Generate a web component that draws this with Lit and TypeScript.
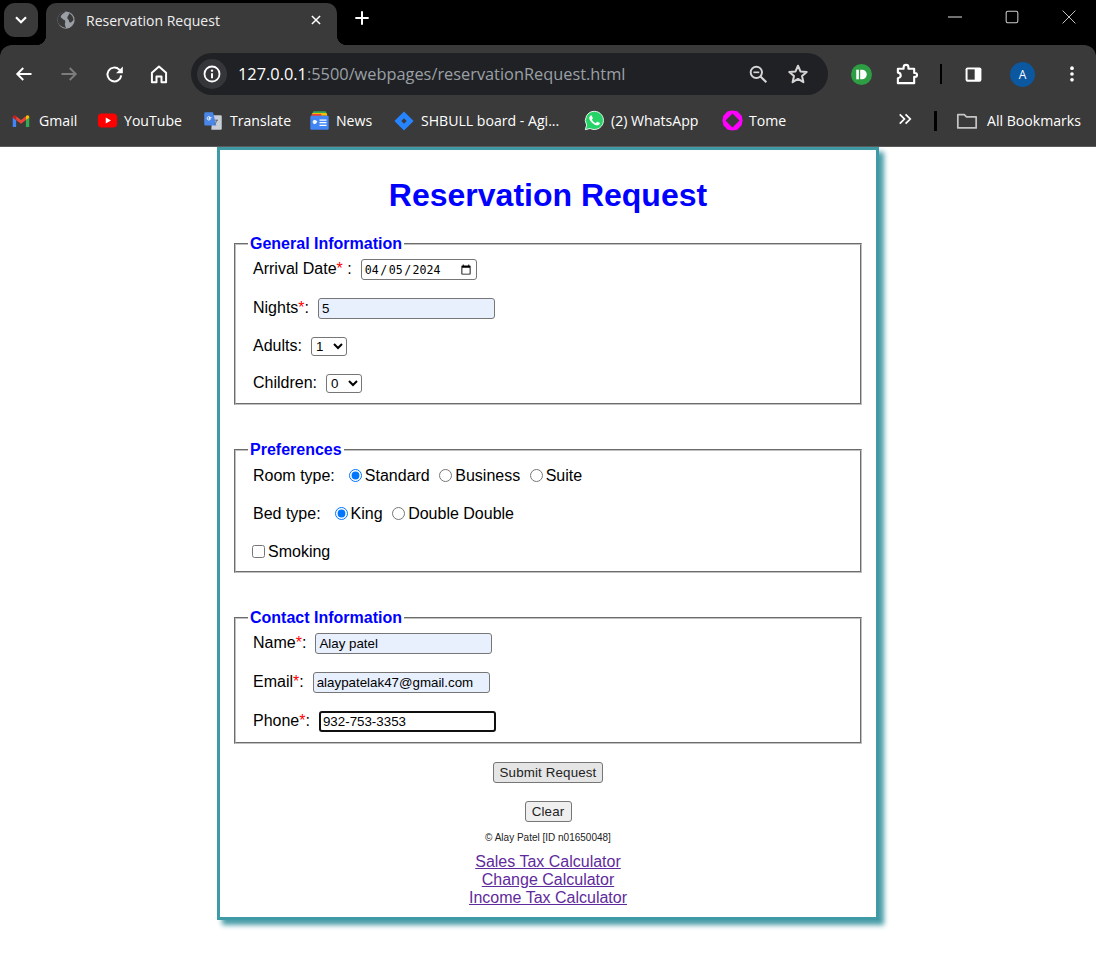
import { LitElement, html, css, svg } from "lit";
import { customElement } from "lit/decorators.js";

const icon = (size: number, body: unknown, vb = "0 0 24 24") =>
  html`<svg width=${size} height=${size} viewBox=${vb} fill="none" aria-hidden="true">${body}</svg>`;

const marks = {
  gmail: svg`<path d="M1 20h4.500V10.500L1 7z" fill="#4285f4"/><path d="M18.500 20H23V7l-4.500 3.500z" fill="#34a853"/><path d="M5.500 10.500 12 15.500l6.500-5V5.500L12 10.500 5.500 5.500z" fill="#ea4335"/><path d="M1 7.500V7c0-2.500 2.800-3.500 4.500-1.500v5z" fill="#c5221f"/><path d="M18.500 10.500v-5C20.500 3.500 23 4.500 23 7v.5z" fill="#fbbc04"/>`,
  youtube: svg`<rect x="1" y="4" width="22" height="16" rx="4.500" fill="#f00"/><path d="M10 8.500v7l6-3.500z" fill="#fff"/>`,
  translate: svg`<path d="M11 5h10a1.500 1.500 0 0 1 1.500 1.500V21a1.500 1.500 0 0 1-1.500 1.500H10z" fill="#c9ced6"/><path d="M3 1.500h9l4 16H3A1.500 1.500 0 0 1 1.500 16V3A1.500 1.500 0 0 1 3 1.500z" fill="#4a86e8"/><path d="M18 11h-3.500M16.500 11c-.3 2-1.500 4-3 5" stroke="#5f6368" stroke-width="1.200"/><path d="M10.300 8H7.200v1.300h1.700a2 2 0 1 1-.6-2" stroke="#fff" stroke-width="1.100"/>`,
  news: svg`<path d="M5 1.500h14l2 4H3z" fill="#34a853"/><path d="M4 3.500h16l1 3H3z" fill="#fbbc04"/><path d="M3 4.500h11v3H3z" fill="#ea4335"/><rect x="1.500" y="6.500" width="21" height="16" rx="1.500" fill="#4285f4"/><path d="M9.300 13H6.500v1.300h1.600a1.700 1.700 0 1 1-.5-2" stroke="#fff" stroke-width="1.200"/><path d="M12 11.500h8M12 14.500h8M12 17.500h8" stroke="#fff" stroke-width="1.500"/>`,
  jira: svg`<path fill-rule="evenodd" d="M12 .5 23.500 12 12 23.500.5 12zM12 8.800 8.800 12l3.200 3.200 3.200-3.200z" fill="#2684ff"/>`,
  whatsapp: svg`<path d="M12 1.500A10.400 10.400 0 0 0 3 17.200L1.500 22.500l5.500-1.400A10.400 10.400 0 1 0 12 1.500z" fill="#25d366" stroke="#fff" stroke-width="1"/><path d="M17.472 14.382c-.297-.149-1.758-.867-2.030-.967-.273-.099-.471-.148-.67.150-.197.297-.767.966-.940 1.164-.173.199-.347.223-.644.075-.297-.150-1.255-.463-2.390-1.475-.883-.788-1.480-1.761-1.653-2.059-.173-.297-.018-.458.130-.606.134-.133.298-.347.446-.520.149-.174.198-.298.298-.497.099-.198.050-.371-.025-.520-.075-.149-.669-1.612-.916-2.207-.242-.579-.487-.5-.669-.510-.173-.008-.371-.010-.570-.010-.198 0-.520.074-.792.372-.272.297-1.040 1.016-1.040 2.479 0 1.462 1.065 2.875 1.213 3.074.149.198 2.096 3.200 5.077 4.487.709.306 1.262.489 1.694.625.712.227 1.360.195 1.871.118.571-.085 1.758-.719 2.006-1.413.248-.694.248-1.289.173-1.413-.074-.124-.272-.198-.570-.347" fill="#fff"/>`,
  tome: svg`<path fill-rule="evenodd" d="M6.500 1.500 12 .5l5.500 1 5 5 1 5.500-1 5.500-5 5-5.500 1-5.500-1-5-5L.5 12l1-5.500zM12 4 4 12l8 8 8-8z" fill="#f0f"/>`,
};

const bookmarks: [string, keyof typeof marks, number][] = [
  ["Gmail", "gmail", 18],
  ["YouTube", "youtube", 21],
  ["Translate", "translate", 20],
  ["News", "news", 21],
  ["SHBULL board - Agi...", "jira", 20],
  ["(2) WhatsApp", "whatsapp", 21],
  ["Tome", "tome", 21],
];

@customElement("browser-frame")
class BrowserFrame extends LitElement {
  static styles = css`
    :host { display: block; background: #000; font-family: "Open Sans", "Noto Sans", sans-serif; color: #fff; }
    .strip { height: 45px; display: flex; align-items: flex-start; padding-top: 3px; box-sizing: border-box; }
    .collapse { width: 34px; height: 34px; margin-left: 4px; border-radius: 11px; background: #3a3a3a; display: grid; place-items: center; }
    .tab { position: relative; width: 291px; height: 42px; margin-left: 8px; background: #3a3a3a; border-radius: 10px 10px 0 0; display: flex; align-items: center; padding: 0 14px 8px 11px; box-sizing: border-box; }
    .tab::before, .tab::after { content: ""; position: absolute; bottom: 0; width: 10px; height: 10px; }
    .tab::before { left: -10px; background: radial-gradient(circle at 0 0, transparent 10px, #3a3a3a 10.5px); }
    .tab::after { right: -10px; background: radial-gradient(circle at 100% 0, transparent 10px, #3a3a3a 10.5px); }
    .title { font-size: 14px; margin-left: 11px; flex: 1; white-space: nowrap; color: #eee; }
    .plus { margin: 7px 0 0 17px; display: grid; }
    .win { margin-left: auto; display: grid; grid-template-columns: repeat(3, 57px); justify-items: center; padding: 7px 0 0; width: 171px; margin-right: -1px; }
    .panel { background: #3a3a3a; border-radius: 12px 12px 0 0; }
    .tools { height: 50px; display: flex; align-items: center; padding: 8px 0 0 1.500px; box-sizing: border-box; }
    .btn { width: 45px; display: grid; place-items: center; }
    .pill { width: 637px; height: 42px; margin-left: 9.500px; border-radius: 21px; background: #202124; display: flex; align-items: center; box-sizing: border-box; padding: 0 19px 0 6px; }
    .chip { width: 30px; height: 30px; border-radius: 50%; background: #35363a; display: grid; place-items: center; }
    .url { font-size: 16.350px; margin-left: 11px; flex: 1; color: #9aa0a6; white-space: nowrap; }
    .url b { font-weight: 400; color: #fff; }
    .pill svg + svg { margin-left: 19px; }
    .right { display: grid; grid-template-columns: 45px 45px 23px 43px 55px 43px; justify-items: center; align-items: center; margin-left: 11px; }
    .sep { width: 2px; height: 20px; background: #000; }
    .avatar { width: 25px; height: 25px; border-radius: 50%; background: #0b57a0; font-size: 12px; display: grid; place-items: center; }
    .marks { height: 52px; display: grid; grid-template-columns: 85px 106px 106px 85px 190px 138px 176px 20px 52px 1fr; align-items: center; padding-left: 12px; box-sizing: border-box; border-bottom: 1px solid #5a5a5a; font-size: 14.100px; }
    .mark { display: flex; align-items: center; white-space: nowrap; }
    .mark span { position: absolute; margin-left: 27px; }
    .div { width: 3px; height: 20px; background: #000; margin-left: 16px; }
    .all { display: flex; align-items: center; gap: 9px; white-space: nowrap; margin-left: -14px; }
  `;
  render() {
    const w = "#fff";
    return html`
      <div class="strip">
        <div class="collapse">${icon(16, svg`<path d="M4.500 8l7.500 7.500L19.500 8" stroke=${w} stroke-width="3.200"/>`)}</div>
        <div class="tab">
          ${icon(18, svg`<circle cx="12" cy="12" r="11.500" fill="#9aa0a6"/><path d="M12 .5C9 3 6 4 5 7c-.5 2 2 2.500 3 4s3 .5 3 3-1 3 0 6l1 3c-2-1-3-1-5-2C3 19 .5 16 .5 12 .5 6 5 1 12 .5zM16 3c3 1 6 5 6 9l-3 3c-1.500 1-3 0-3-2s-3-2-2-5c.5-2 2-2 2-5z" fill="#3a3a3a"/>`)}
          <span class="title">Reservation Request</span>
          ${icon(14, svg`<path d="M5 5l14 14M19 5L5 19" stroke=${w} stroke-width="2.600"/>`)}
        </div>
        <div class="plus">${icon(16, svg`<path d="M12 2v20M2 12h20" stroke=${w} stroke-width="3"/>`)}</div>
        <div class="win">
          ${icon(14, svg`<path d="M0 12h24" stroke=${w} stroke-width="1.500"/>`)}
          ${icon(14, svg`<rect x="2" y="2" width="20" height="20" rx="3" stroke="#ccc" stroke-width="1.800"/>`)}
          ${icon(14, svg`<path d="M1 1l22 22M23 1L1 23" stroke="#eee" stroke-width="1.400"/>`)}
        </div>
      </div>
      <div class="panel">
        <div class="tools">
          <div class="btn">${icon(18, svg`<path d="M22 12H3M11 4l-8 8 8 8" stroke=${w} stroke-width="2.600"/>`)}</div>
          <div class="btn">${icon(18, svg`<path d="M2 12h19M13 4l8 8-8 8" stroke="#7c7c7c" stroke-width="2.600"/>`)}</div>
          <div class="btn">${icon(19, svg`<path d="M20.500 13a8.700 8.700 0 1 1-2.500-7.200L21 8.500" stroke=${w} stroke-width="2.500"/><path d="M22.500 2v8.500H14z" fill=${w}/>`)}</div>
          <div class="btn">${icon(20, svg`<path d="M3.500 22V10.500L12 3l8.500 7.500V22H15v-7H9v7z" stroke=${w} stroke-width="2.400" stroke-linejoin="round"/>`)}</div>
          <div class="pill">
            <div class="chip">${icon(18, svg`<circle cx="12" cy="12" r="10" stroke=${w} stroke-width="2.400"/><path d="M12 11v6.500" stroke=${w} stroke-width="2.600"/><circle cx="12" cy="7.500" r="1.600" fill=${w}/>`)}</div>
            <span class="url"><b>127.0.0.1</b>:5500/webpages/reservationRequest.html</span>
            ${icon(20, svg`<circle cx="10" cy="10" r="6.800" stroke="#d5d5d5" stroke-width="2.300"/><path d="M15 15l7 7" stroke="#d5d5d5" stroke-width="2.600"/><path d="M6.500 10h7" stroke="#d5d5d5" stroke-width="2"/>`)}
            ${icon(22, svg`<path d="M12 3l2.700 6.200 6.800.6-5.100 4.500 1.500 6.600L12 17.400l-5.900 3.500 1.500-6.600-5.100-4.500 6.800-.6z" stroke="#d5d5d5" stroke-width="2.200" stroke-linejoin="round"/>`)}
          </div>
          <div class="right">
            ${icon(21, svg`<circle cx="12" cy="12" r="12" fill="#2e9e44"/><rect x="6" y="6.500" width="3" height="11" fill="#fff"/><path d="M10.500 6.500h2a5.500 5.500 0 0 1 0 11h-2z" fill="#fff"/>`)}
            ${icon(23, svg`<path d="M3 6h6V4.500a2.500 2.500 0 0 1 5 0V6h6v4.500h1a2 2 0 0 1 0 4h-1V21H3v-5c2.500-.5 3-2.500 3-2.500C6 11 5 10 3 10z" stroke=${w} stroke-width="2.200" stroke-linejoin="round"/>`)}
            <div class="sep"></div>
            ${icon(19, svg`<rect x="2" y="3" width="20" height="18" rx="2.500" fill=${w}/><rect x="4.500" y="5.500" width="9" height="13" fill="#3a3a3a"/>`)}
            <div class="avatar">A</div>
            ${icon(20, svg`<circle cx="12" cy="5" r="2.200" fill=${w}/><circle cx="12" cy="12" r="2.200" fill=${w}/><circle cx="12" cy="19" r="2.200" fill=${w}/>`)}
          </div>
        </div>
        <div class="marks">
          ${bookmarks.map(([label, mark, size]) => html`<div class="mark">${icon(size, marks[mark])}<span>${label}</span></div>`)}
          <div>${icon(14, svg`<path d="M3 4l8 8-8 8M13 4l8 8-8 8" stroke=${w} stroke-width="3"/>`)}</div>
          <div class="div"></div>
          <div class="all">${icon(22, svg`<path d="M2 19.500V5h7l2.500 2.500H22v12z" stroke="#c4c4c4" stroke-width="1.900" stroke-linejoin="round"/>`)}<span>All Bookmarks</span></div>
        </div>
      </div>
    `;
  }
}

@customElement("app-root")
class AppRoot extends LitElement {
  static styles = css`
    :host { display: block; min-height: 979px; background: #fff; font-family: "Liberation Sans", Arial, sans-serif; font-size: 16px; color: #000; }
    .card { width: 662px; box-sizing: border-box; margin: 0 auto; border: 3px solid #3f9aa5; box-shadow: 5px 5px 5px #4a9da8; padding: 27px 14px 10px; background: #fff; }
    h1 { margin: 0 0 21px; font-size: 32px; line-height: 37px; text-align: center; color: #00f; }
    fieldset { margin: 0 0 36px; padding: 0 12px 10px; border: 2px groove #c0c0c0; }
    fieldset.last { margin-bottom: 18px; }
    legend { color: #00f; font-weight: 700; line-height: 18px; padding: 0 2px; }
    .row { display: flex; align-items: center; gap: 9px; padding-left: 5px; margin-top: 18px; min-height: 18px; }
    .row:first-of-type { margin-top: 6px; }
    .prefs .row { margin-top: 20px; gap: 14px; }
    .prefs .row:first-of-type { margin-top: 8px; }
    .prefs .check { gap: 0; padding-left: 4px; }
    label.txt { margin-bottom: 1px; white-space: nowrap; }
    .req { color: #f00; }
    input, select, button { font-family: "Liberation Sans", Arial, sans-serif; font-size: 13.333px; box-sizing: border-box; margin: 0; color: #000; }
    input.field { width: 177px; height: 21px; border: 1px solid #767676; border-radius: 3px; padding: 1px 3px; background: #fff; }
    input.auto { background: #e8f0fe; }
    input.focus { border: 2px solid #101010; padding: 0 2px; }
    input.date { width: 116px; height: 21px; border: 1px solid #767676; border-radius: 3px; padding: 1px 2px; font-family: "DejaVu Sans Mono", monospace; font-size: 11.600px; background: #fff; }
    input.date::-webkit-datetime-edit-text { padding: 0 .5px; }
    select { width: 36px; height: 19px; border: 1px solid #767676; border-radius: 3px; background: #fff; padding: 0; }
    .opts { display: flex; align-items: center; }
    .opt { display: flex; align-items: center; margin-right: 9.500px; }
    .opt input { margin: 0 3px 2px 0; width: 13px; height: 13px; }
    .check input { margin: 0 3px 2px 0; width: 13px; height: 13px; }
    .actions { display: flex; flex-direction: column; align-items: center; gap: 18px; }
    button { height: 21px; min-width: 47px; padding: 1px 6px; border: 1px solid #767676; border-radius: 3px; background: #efefef; color: #222; letter-spacing: .15px; }
    button.hover { background: #e5e5e5; }
    .copy { text-align: center; font-size: 10px; line-height: 11px; margin: 10px 0 10px; color: #222; }
    .links { display: flex; flex-direction: column; align-items: center; line-height: 18px; }
    a { color: #5f2a9c; }
  `;
  render() {
    const req = html`<span class="req">*</span>`;
    return html`
      <browser-frame></browser-frame>
      <main class="card">
        <h1>Reservation Request</h1>
        <form>
          <fieldset>
            <legend>General Information</legend>
            <div class="row"><label class="txt">Arrival Date${req} :</label><input class="date" type="date" value="2024-04-05"></div>
            <div class="row"><label class="txt">Nights${req}:</label><input class="field auto" value="5"></div>
            <div class="row"><label class="txt">Adults:</label><select><option>1</option></select></div>
            <div class="row"><label class="txt">Children:</label><select><option>0</option></select></div>
          </fieldset>
          <fieldset class="prefs">
            <legend>Preferences</legend>
            <div class="row"><span>Room type:</span><div class="opts">
              <label class="opt"><input type="radio" name="room" checked>Standard</label>
              <label class="opt"><input type="radio" name="room">Business</label>
              <label class="opt"><input type="radio" name="room">Suite</label>
            </div></div>
            <div class="row"><span>Bed type:</span><div class="opts">
              <label class="opt"><input type="radio" name="bed" checked>King</label>
              <label class="opt"><input type="radio" name="bed">Double Double</label>
            </div></div>
            <div class="row check"><input type="checkbox"><label>Smoking</label></div>
          </fieldset>
          <fieldset class="last">
            <legend>Contact Information</legend>
            <div class="row"><label class="txt">Name${req}:</label><input class="field auto" value="Alay patel"></div>
            <div class="row"><label class="txt">Email${req}:</label><input class="field auto" value="alaypatelak47@gmail.com"></div>
            <div class="row"><label class="txt">Phone${req}:</label><input class="field focus" value="932-753-3353"></div>
          </fieldset>
          <div class="actions">
            <button type="button" class="hover">Submit Request</button>
            <button type="button">Clear</button>
          </div>
        </form>
        <p class="copy">© Alay Patel [ID n01650048]</p>
        <nav class="links">
          <a href="#sales">Sales Tax Calculator</a>
          <a href="#change">Change Calculator</a>
          <a href="#income">Income Tax Calculator</a>
        </nav>
      </main>
    `;
  }
}
